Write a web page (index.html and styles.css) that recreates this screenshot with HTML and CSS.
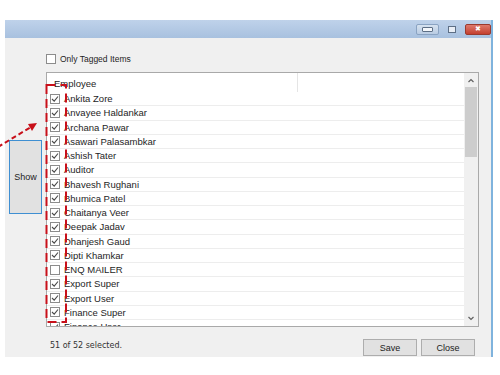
FILE: index.html
```html
<!DOCTYPE html>
<html lang="en">
<head>
    <meta charset="UTF-8">
    <title>Employee Filter</title>
    <link rel="stylesheet" href="styles.css">
</head>
<body>

<!-- Pencere -->
<div class="window">
    <div class="titlebar">
        <span class="win-btn win-min"><i></i></span>
        <span class="win-btn win-max"><i></i></span>
        <span class="win-btn win-close">&#x2716;</span>
    </div>

    <div class="content">
        <div class="side">
            <button class="show-button">Show</button>
        </div>

        <div class="main">
            <label class="tagged">
                <span class="box"></span>
                <span>Only Tagged Items</span>
            </label>

            <div class="list">
                <div class="list-body">
                    <div class="list-header">
                        <span class="col-name">Employee</span>
                        <span class="col-rest"></span>
                    </div>
                    <div id="rows"></div>
                </div>
                <div class="scrollbar">
                    <svg class="arrow" width="8" height="14" viewBox="0 0 8 14"><path d="M1.5 9 L4 6.5 L6.5 9" fill="none" stroke="#606060" stroke-width="1.2"/></svg>
                    <span class="thumb"></span>
                    <span class="track"></span>
                    <svg class="arrow" width="8" height="14" viewBox="0 0 8 14"><path d="M1.5 5 L4 7.5 L6.5 5" fill="none" stroke="#606060" stroke-width="1.2"/></svg>
                </div>
            </div>
        </div>
    </div>

    <div class="footer">
        <span class="selected-count">51 of 52 selected.</span>
        <button class="dlg-button">Save</button>
        <button class="dlg-button">Close</button>
    </div>
</div>

<!-- Kırmızı işaretler -->
<svg class="marks" width="500" height="375" viewBox="0 0 500 375">
    <rect x="46.5" y="85" width="19.5" height="237" fill="none" stroke="#c8101a" stroke-width="2" stroke-dasharray="9 5"/>
    <line x1="-2" y1="147" x2="31" y2="127" stroke="#c8101a" stroke-width="2" stroke-dasharray="5 3"/>
    <polygon points="37,123 28,124 32,131" fill="#c8101a"/>
</svg>

<script>
    var employees = [
        ['Ankita Zore', true], ['Anvayee Haldankar', true], ['Archana Pawar', true],
        ['Asawari Palasambkar', true], ['Ashish Tater', true], ['Auditor', true],
        ['Bhavesh Rughani', true], ['Bhumica Patel', true], ['Chaitanya Veer', true],
        ['Deepak Jadav', true], ['Dhanjesh Gaud', true], ['Dipti Khamkar', true],
        ['ENQ MAILER', false], ['Export Super', true], ['Export User', true],
        ['Finance Super', true], ['Finance User', true]
    ];

    var tick = '<svg width="8" height="8" viewBox="0 0 8 8"><path d="M1 4 L3.2 6.2 L7 1.5" fill="none" stroke="#4a4a4a" stroke-width="1.1"/></svg>';
    var html = '';
    employees.forEach(function (e) {
        html += '<div class="row"><span class="box">' + (e[1] ? tick : '') + '</span><span>' + e[0] + '</span></div>';
    });
    document.getElementById('rows').innerHTML = html;
</script>

</body>
</html>
```

FILE: styles.css
```css
/* Genel */
body {
    margin: 0;
    background: #ffffff;
    font-family: 'Liberation Sans', Arial, sans-serif;
    color: #1e1e1e;
    position: relative;
    width: 500px;
    height: 375px;
    overflow: hidden;
}

/* Pencere */
.window {
    margin: 20px 0 0 5px;
    width: 488px;
    height: 337px;
    background: #f0f0f0;
    border-right: 2px solid #7fb3dd;
    box-sizing: border-box;
    display: flex;
    flex-direction: column;
}

.titlebar {
    height: 18px;
    background: linear-gradient(#bfd2ea, #a8c1df);
    display: flex;
    justify-content: flex-end;
    align-items: center;
    gap: 4px;
}

.win-btn {
    height: 11px;
    display: flex;
    align-items: center;
    justify-content: center;
    box-sizing: border-box;
    border-radius: 2px;
}

.win-min {
    width: 23px;
    border: 1px solid #8aa3c2;
    background: linear-gradient(#d6e2f0, #b9cce3);
}

.win-min i {
    width: 9px;
    height: 3px;
    background: #f4f7fb;
    border: 1px solid #5d6f86;
    border-radius: 1px;
}

.win-max {
    width: 18px;
}

.win-max i {
    width: 6px;
    height: 5px;
    border: 1px solid #5d6f86;
    background: #e8eef6;
}

.win-close {
    width: 26px;
    background: linear-gradient(#de7a6d, #c4402f);
    border: 1px solid #9a3a2e;
    color: #ffffff;
    font-size: 7px;
}

/* İçerik */
.content {
    display: flex;
    padding: 16px 0 0 4px;
}

.side {
    width: 33px;
}

.show-button {
    margin-top: 86px;
    width: 33px;
    height: 74px;
    background: #e1e1e1;
    border: 1px solid #3f8fd2;
    font-family: 'Liberation Sans', Arial, sans-serif;
    font-size: 9px;
    color: #222222;
    padding: 0;
}

.main {
    margin-left: 4px;
    width: 433px;
}

.tagged {
    display: flex;
    align-items: center;
    height: 10px;
    gap: 4px;
    font-size: 8.5px;
    margin-bottom: 8px;
}

.box {
    width: 10px;
    height: 10px;
    border: 1px solid #8c8c8c;
    background: #ffffff;
    box-sizing: border-box;
    display: flex;
    align-items: center;
    justify-content: center;
    flex: none;
}

/* Liste */
.list {
    height: 255px;
    border: 1px solid #a9a9a9;
    background: #ffffff;
    box-sizing: border-box;
    display: flex;
    overflow: hidden;
}

.list-body {
    width: 417px;
    font-size: 9.5px;
}

.list-header {
    height: 19px;
    display: flex;
}

.col-name {
    width: 243px;
    padding: 5px 0 0 7px;
    border-right: 1px solid #e5e5e5;
}

.row {
    height: 14.25px;
    display: flex;
    align-items: center;
    gap: 4px;
    padding-left: 3px;
    border-bottom: 1px solid #ededed;
    box-sizing: border-box;
}

.scrollbar {
    width: 14px;
    background: #f0f0f0;
    display: flex;
    flex-direction: column;
    align-items: center;
}

.arrow {
    flex: none;
}

.thumb {
    width: 12px;
    height: 70px;
    background: #cdcdcd;
}

.track {
    flex: 1;
}

/* Alt kısım */
.footer {
    display: flex;
    align-items: center;
    margin-top: 12px;
    padding: 0 16px 0 45px;
    gap: 4px;
}

.selected-count {
    flex: 1;
    font-family: 'DejaVu Sans', sans-serif;
    font-size: 8px;
    color: #333333;
    margin-top: -5px;
}

.dlg-button {
    width: 54px;
    height: 17px;
    background: #e1e1e1;
    border: 1px solid #adadad;
    font-family: 'Liberation Sans', Arial, sans-serif;
    font-size: 9px;
    color: #222222;
    padding: 0;
}

/* Kırmızı işaretler */
.marks {
    position: absolute;
    top: 0;
    left: 0;
    pointer-events: none;
}
```
